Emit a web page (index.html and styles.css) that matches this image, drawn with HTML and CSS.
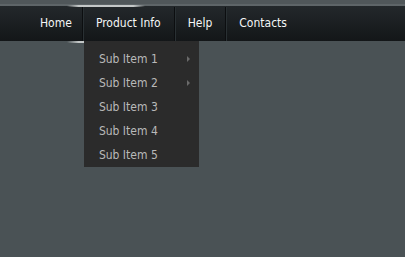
FILE: index.html
```html
<!DOCTYPE html>
<html>
<head>
<meta charset="utf-8">
<link rel="stylesheet" href="styles.css">
</head>
<body>
<div class="topstrip"></div>
<nav class="bar">
  <ul class="menu">
    <li class="item"><a href="#">Home</a></li>
    <li class="item active wide"><a href="#">Product Info</a>
      <ul class="sub">
        <li class="has-arrow">Sub Item 1</li>
        <li class="has-arrow">Sub Item 2</li>
        <li>Sub Item 3</li>
        <li>Sub Item 4</li>
        <li>Sub Item 5</li>
      </ul>
    </li>
    <li class="item wide"><a href="#">Help</a></li>
    <li class="item last"><a href="#">Contacts</a></li>
  </ul>
</nav>
</body>
</html>
```
FILE: styles.css
```css
html, body {
  margin: 0;
  padding: 0;
}
body {
  background: #4a5255;
  font-family: "DejaVu Sans Condensed", "DejaVu Sans", sans-serif;
  font-size: 12px;
  width: 405px;
  height: 257px;
  overflow: hidden;
}
.topstrip {
  height: 4px;
  background: #50575a;
  border-bottom: 2px solid #5e6568;
}
.bar {
  height: 35px;
  background: linear-gradient(#23282b, #131618);
}
.menu {
  list-style: none;
  margin: 0;
  padding: 0 0 0 28px;
  display: flex;
  height: 100%;
}
.item {
  position: relative;
  display: flex;
  align-items: center;
  padding: 0 12px;
}
.item.wide {
  padding-right: 15px;
}
.item > a::after {
  content: "";
  position: absolute;
  right: 0;
  top: 1px;
  bottom: 0;
  width: 1px;
  background: #0c0e10;
  border-right: 1px solid #293033;
}
.item.last > a::after {
  display: none;
}
.item a {
  color: #f4f6f6;
  text-decoration: none;
  position: static;
  margin-top: -2px;
}
.active::before,
.active::after {
  content: "";
  position: absolute;
  left: -17px;
  width: 78px;
  height: 2px;
  background: linear-gradient(90deg, rgba(190,195,196,0), #c4c8c8 15%, #c4c8c8 85%, rgba(190,195,196,0));
}
.active::before {
  top: -1px;
}
.active::after {
  bottom: -2px;
}
.sub {
  position: absolute;
  left: 0;
  top: 35px;
  width: 115px;
  margin: 0;
  padding: 6px 0 0;
  list-style: none;
  background: #2b2b2b;
  z-index: 2;
}
.sub li {
  position: relative;
  height: 24px;
  line-height: 24px;
  padding-left: 15px;
  color: #b9b9b9;
}
.has-arrow::after {
  content: "";
  position: absolute;
  right: 9px;
  top: 9px;
  border-left: 3px solid #6a6a6a;
  border-top: 3px solid transparent;
  border-bottom: 3px solid transparent;
}
```
